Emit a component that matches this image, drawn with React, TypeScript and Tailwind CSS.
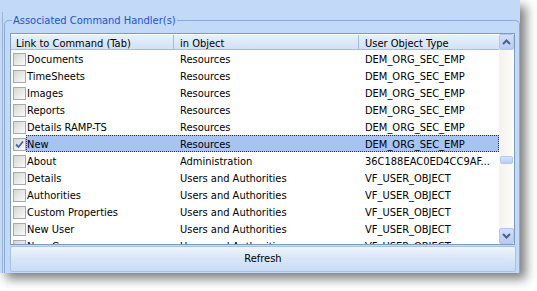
import React from 'react';

const rows = [
  { name: 'Documents', obj: 'Resources', type: 'DEM_ORG_SEC_EMP' },
  { name: 'TimeSheets', obj: 'Resources', type: 'DEM_ORG_SEC_EMP' },
  { name: 'Images', obj: 'Resources', type: 'DEM_ORG_SEC_EMP' },
  { name: 'Reports', obj: 'Resources', type: 'DEM_ORG_SEC_EMP' },
  { name: 'Details RAMP-TS', obj: 'Resources', type: 'DEM_ORG_SEC_EMP' },
  { name: 'New', obj: 'Resources', type: 'DEM_ORG_SEC_EMP', checked: true },
  { name: 'About', obj: 'Administration', type: '36C188EAC0ED4CC9AF...' },
  { name: 'Details', obj: 'Users and Authorities', type: 'VF_USER_OBJECT' },
  { name: 'Authorities', obj: 'Users and Authorities', type: 'VF_USER_OBJECT' },
  { name: 'Custom Properties', obj: 'Users and Authorities', type: 'VF_USER_OBJECT' },
  { name: 'New User', obj: 'Users and Authorities', type: 'VF_USER_OBJECT' },
  { name: 'New Group', obj: 'Users and Authorities', type: 'VF_USER_OBJECT' },
];

const font = 'font-["DejaVu_Sans_Condensed","Liberation_Sans",sans-serif]';

const CheckBox = ({ checked }: { checked?: boolean }) => (
  <div className="w-[13px] h-[13px] border border-[#a7a9ad] bg-gradient-to-br from-[#d6d6d2] to-[#fbfbfa] flex items-center justify-center">
    {checked && (
      <svg width="9" height="9" viewBox="0 0 9 9">
        <path d="M1 4.5 L3.5 7 L8 1.5" fill="none" stroke="#4663b8" strokeWidth="1.8" />
      </svg>
    )}
  </div>
);

const Chevron = ({ down }: { down?: boolean }) => (
  <svg width="9" height="6" viewBox="0 0 9 6">
    <path d={down ? 'M1 1 L4.5 4.5 L8 1' : 'M1 5 L4.5 1.5 L8 5'} fill="none" stroke="#4d6185" strokeWidth="2" />
  </svg>
);

const ScrollButton = ({ down }: { down?: boolean }) => (
  <div className="h-[16px] rounded-[2px] border border-[#b4c6ec] bg-gradient-to-b from-[#d3e0fb] to-[#b8cbf5] flex items-center justify-center">
    <Chevron down={down} />
  </div>
);

export default function App() {
  return (
    <div className={`w-[537px] h-[291px] bg-white overflow-hidden text-[11px] text-black ${font}`}>
      <div className="w-[520px] h-[273px] bg-[#c2d9f7] shadow-[6px_6px_10px_rgba(0,0,0,0.5)] pt-[12px] pl-[2px] flex flex-col">
        <div className="flex-1 border-l border-[#9fb3cf] pl-[1px] pt-[2px] flex flex-col">
          <fieldset className="w-[516px] flex-1 border border-b-0 border-[#86acdf] rounded-t-[5px] pl-[5px] pt-[6px]">
            <legend className="ml-[2px] px-[1px] leading-[13px] text-[#1c55cf]">Associated Command Handler(s)</legend>
            <div className="w-[505px] h-[212px] border border-[#7f9db9] bg-white flex">
              <div className="flex-1 flex flex-col overflow-hidden">
                <div className="h-[16px] flex shrink-0 bg-gradient-to-b from-[#e9f0fb] to-[#d2e1f6] border-t border-white border-b border-b-[#a3bde0] leading-[13px]">
                  <div className="w-[163px] pl-[5px] pt-[2px] border-r border-[#a3bde0]">Link to Command (Tab)</div>
                  <div className="w-[185px] pl-[6px] pt-[2px] border-r border-[#a3bde0]">in Object</div>
                  <div className="flex-1 pl-[6px] pt-[2px]">User Object Type</div>
                </div>
                {rows.map((r, i) => (
                  <div key={i} className="h-[17px] flex items-start shrink-0">
                    <div className="w-[15px] pl-[2px] pt-[3px] shrink-0">
                      <CheckBox checked={r.checked} />
                    </div>
                    <div
                      className={`flex-1 h-[17px] flex items-start pt-[3px] leading-[13px] whitespace-nowrap ${
                        r.checked ? 'bg-[#a6c3f1] outline-1 outline-dotted outline-offset-[-1px] outline-[#3b3320]' : ''
                      }`}
                    >
                      <div className="w-[148px] pl-[1px] overflow-hidden">{r.name}</div>
                      <div className="w-[185px] pl-[6px] overflow-hidden">{r.obj}</div>
                      <div className="flex-1 pl-[6px] overflow-hidden">{r.type}</div>
                    </div>
                  </div>
                ))}
              </div>
              <div className="w-[15px] shrink-0 flex flex-col bg-gradient-to-r from-[#f4f3ee] to-[#fbfbf8]">
                <ScrollButton />
                <div className="flex-1 flex flex-col pt-[106px]">
                  <div className="h-[8px] mx-[1px] rounded-[2px] border border-[#b7caf3] bg-gradient-to-b from-[#d6e2fb] to-[#b9cdf6]" />
                </div>
                <ScrollButton down />
              </div>
            </div>
            <button className="mt-[1px] w-[506px] h-[26px] rounded-[2px] border border-[#a9c1e2] bg-gradient-to-b from-[#eef4fd] via-[#d9e6f8] to-[#c9dcf6] text-center">
              Refresh
            </button>
          </fieldset>
        </div>
      </div>
    </div>
  );
}
